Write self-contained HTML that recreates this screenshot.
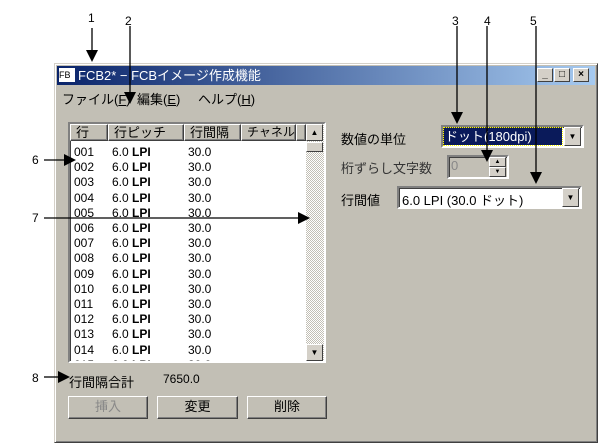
<!DOCTYPE html>
<html><head><meta charset="utf-8"><style>
*{margin:0;padding:0;box-sizing:border-box}
body{width:602px;height:444px;background:#fff;position:relative;overflow:hidden;font-family:"Liberation Sans","Noto Sans CJK JP",sans-serif;font-size:12px;color:#000}
.a{position:absolute}
.win{left:54px;top:63px;width:544px;height:380px;background:#c2bfb5;border:1px solid;border-color:#d4d0c8 #404040 #404040 #d4d0c8;box-shadow:inset 1px 1px 0 #fff,inset -1px -1px 0 #808080}
.title{left:57px;top:66px;width:538px;height:19px;background:linear-gradient(90deg,#0a246a,#a6caf0);color:#fff;font-size:13px;line-height:19px}
.tb{top:68px;width:16px;height:14px;background:#d4d0c8;border:1px solid;border-color:#fff #404040 #404040 #fff;font-size:10px;line-height:11px;text-align:center;font-weight:bold}
.sunk{border:2px solid;border-color:#808080 #fff #fff #808080;box-shadow:inset 1px 1px 0 #404040}
.btn{background:#c2bfb5;border:1px solid;border-color:#fff #404040 #404040 #fff;box-shadow:inset -1px -1px 0 #808080;text-align:center;font-size:13px;line-height:20px}
.dd{width:17px;background:#d4d0c8;border:1px solid;border-color:#fff #404040 #404040 #fff;font-size:8px;text-align:center}
.row{position:absolute;left:0;height:15.2px;line-height:15px;font-size:12px}
.ln{background:#000}
.num{font-size:12px}
</style></head><body>
<div class="a win"></div>
<div class="a title"><span style="display:inline-block;width:16px;height:14px;background:#fff;color:#000;font-size:9px;line-height:14px;margin:2px 3px 0 2px;vertical-align:top">FB</span>FCB2* − FCBイメージ作成機能</div>
<div class="a tb" style="left:537px">_</div>
<div class="a tb" style="left:554px">□</div>
<div class="a tb" style="left:573px">×</div>
<div class="a" style="left:62px;top:89px;font-size:13px">ファイル(<u>F</u>)</div>
<div class="a" style="left:137px;top:89px;font-size:13px">編集(<u>E</u>)</div>
<div class="a" style="left:198px;top:89px;font-size:13px">ヘルプ(<u>H</u>)</div>

<div class="a sunk" style="left:68px;top:122px;width:258px;height:241px;background:#fff;overflow:hidden">
 <div class="a" style="left:0;top:0;width:236px;height:17px;background:#c2bfb5;font-size:13px;line-height:16px">
  <div class="a btn" style="left:0;top:0;width:38px;height:17px;text-align:left;padding-left:5px;line-height:15px">行</div>
  <div class="a btn" style="left:38px;top:0;width:76px;height:17px;text-align:left;padding-left:5px;line-height:15px">行ピッチ</div>
  <div class="a btn" style="left:114px;top:0;width:57px;height:17px;text-align:left;padding-left:5px;line-height:15px">行間隔</div>
  <div class="a btn" style="left:171px;top:0;width:55px;height:17px;text-align:left;padding-left:5px;line-height:15px;font-size:12px">チャネル</div>
  <div class="a btn" style="left:226px;top:0;width:10px;height:17px"></div>
 </div>
 <div class="a" style="left:4px;top:21px;width:230px">
  <div class="row" style="top:0">001</div><div class="row" style="top:15.2px">002</div><div class="row" style="top:30.4px">003</div><div class="row" style="top:45.6px">004</div><div class="row" style="top:60.8px">005</div><div class="row" style="top:76px">006</div><div class="row" style="top:91.2px">007</div><div class="row" style="top:106.4px">008</div><div class="row" style="top:121.6px">009</div><div class="row" style="top:136.8px">010</div><div class="row" style="top:152px">011</div><div class="row" style="top:167.2px">012</div><div class="row" style="top:182.4px">013</div><div class="row" style="top:197.6px">014</div><div class="row" style="top:212.8px">015</div>
 </div>
 <div class="a" style="left:42px;top:21px;width:60px">
  <div class="row" style="top:0">6.0 <b>LPI</b></div><div class="row" style="top:15.2px">6.0 <b>LPI</b></div><div class="row" style="top:30.4px">6.0 <b>LPI</b></div><div class="row" style="top:45.6px">6.0 <b>LPI</b></div><div class="row" style="top:60.8px">6.0 <b>LPI</b></div><div class="row" style="top:76px">6.0 <b>LPI</b></div><div class="row" style="top:91.2px">6.0 <b>LPI</b></div><div class="row" style="top:106.4px">6.0 <b>LPI</b></div><div class="row" style="top:121.6px">6.0 <b>LPI</b></div><div class="row" style="top:136.8px">6.0 <b>LPI</b></div><div class="row" style="top:152px">6.0 <b>LPI</b></div><div class="row" style="top:167.2px">6.0 <b>LPI</b></div><div class="row" style="top:182.4px">6.0 <b>LPI</b></div><div class="row" style="top:197.6px">6.0 <b>LPI</b></div><div class="row" style="top:212.8px">6.0 <b>LPI</b></div>
 </div>
 <div class="a" style="left:118px;top:21px;width:40px">
  <div class="row" style="top:0">30.0</div><div class="row" style="top:15.2px">30.0</div><div class="row" style="top:30.4px">30.0</div><div class="row" style="top:45.6px">30.0</div><div class="row" style="top:60.8px">30.0</div><div class="row" style="top:76px">30.0</div><div class="row" style="top:91.2px">30.0</div><div class="row" style="top:106.4px">30.0</div><div class="row" style="top:121.6px">30.0</div><div class="row" style="top:136.8px">30.0</div><div class="row" style="top:152px">30.0</div><div class="row" style="top:167.2px">30.0</div><div class="row" style="top:182.4px">30.0</div><div class="row" style="top:197.6px">30.0</div><div class="row" style="top:212.8px">30.0</div>
 </div>
 <div class="a" style="left:236px;top:0;width:18px;height:237px;background:repeating-conic-gradient(#fff 0 25%,#c2bfb5 0 50%) 0 0/2px 2px"></div>
 <div class="a dd" style="left:236px;top:0;height:17px;line-height:15px">▲</div>
 <div class="a dd" style="left:236px;top:18px;height:10px"></div>
 <div class="a dd" style="left:236px;top:220px;height:17px;line-height:15px">▼</div>
</div>

<div class="a" style="left:341px;top:129px;font-size:13px">数値の単位</div>
<div class="a sunk" style="left:441px;top:125px;width:143px;height:23px;background:#fff">
 <div class="a" style="left:1px;top:1px;width:118px;height:17px;background:#0a1a5a;color:#fff;font-size:13px;line-height:17px;outline:1px dotted #ff0;padding-left:1px">ドット(180dpi)</div>
 <div class="a dd" style="left:121px;top:0;height:19px;line-height:17px">▼</div>
</div>
<div class="a" style="left:341px;top:158px;font-size:13px;color:#333">桁ずらし文字数</div>
<div class="a sunk" style="left:447px;top:155px;width:62px;height:24px;background:#c2bfb5">
 <div class="a" style="left:2px;top:1px;color:#888;font-size:13px">0</div>
 <div class="a dd" style="left:40px;top:0;height:10px;font-size:6px;line-height:8px">▲</div>
 <div class="a dd" style="left:40px;top:10px;height:10px;font-size:6px;line-height:8px">▼</div>
</div>
<div class="a" style="left:341px;top:190px;font-size:13px">行間値</div>
<div class="a sunk" style="left:397px;top:186px;width:185px;height:23px;background:#fff">
 <div class="a" style="left:3px;top:2px;font-size:13px">6.0 LPI (30.0 ドット)</div>
 <div class="a dd" style="left:163px;top:0;height:19px;line-height:17px">▼</div>
</div>

<div class="a" style="left:69px;top:372px;font-size:13px">行間隔合計</div>
<div class="a" style="left:163px;top:372px;font-size:12px">7650.0</div>
<div class="a btn" style="left:68px;top:396px;width:80px;height:23px;color:#888">挿入</div>
<div class="a btn" style="left:157px;top:396px;width:81px;height:23px">変更</div>
<div class="a btn" style="left:247px;top:396px;width:80px;height:23px">削除</div>

<div class="a num" style="left:88px;top:11px">1</div>
<div class="a num" style="left:125px;top:14px">2</div>
<div class="a num" style="left:452px;top:14px">3</div>
<div class="a num" style="left:484px;top:14px">4</div>
<div class="a num" style="left:530px;top:14px">5</div>
<div class="a num" style="left:32px;top:153px">6</div>
<div class="a num" style="left:32px;top:211px">7</div>
<div class="a num" style="left:32px;top:371px">8</div>
<svg class="a" style="left:0;top:0" width="602" height="444">
<g stroke="#000" stroke-width="1.3">
<line x1="92" y1="28" x2="92" y2="52"/><line x1="130" y1="26" x2="130" y2="92"/>
<line x1="457" y1="26" x2="457" y2="112"/><line x1="487" y1="26" x2="487" y2="152"/>
<line x1="536" y1="26" x2="536" y2="174"/>
<line x1="44" y1="160" x2="66" y2="160"/><line x1="44" y1="218" x2="300" y2="218"/>
<line x1="44" y1="377" x2="60" y2="377"/>
</g>
<g fill="#000">
<path d="M86 50h12l-6 12z"/><path d="M124 92h12l-6 12z"/><path d="M451 112h12l-6 12z"/>
<path d="M481 150h12l-6 12z"/><path d="M530 172h12l-6 12z"/>
<path d="M64 154v12l12-6z"/><path d="M298 212v12l12-6z"/><path d="M58 371v12l12-6z"/>
</g></svg>
</body></html>
